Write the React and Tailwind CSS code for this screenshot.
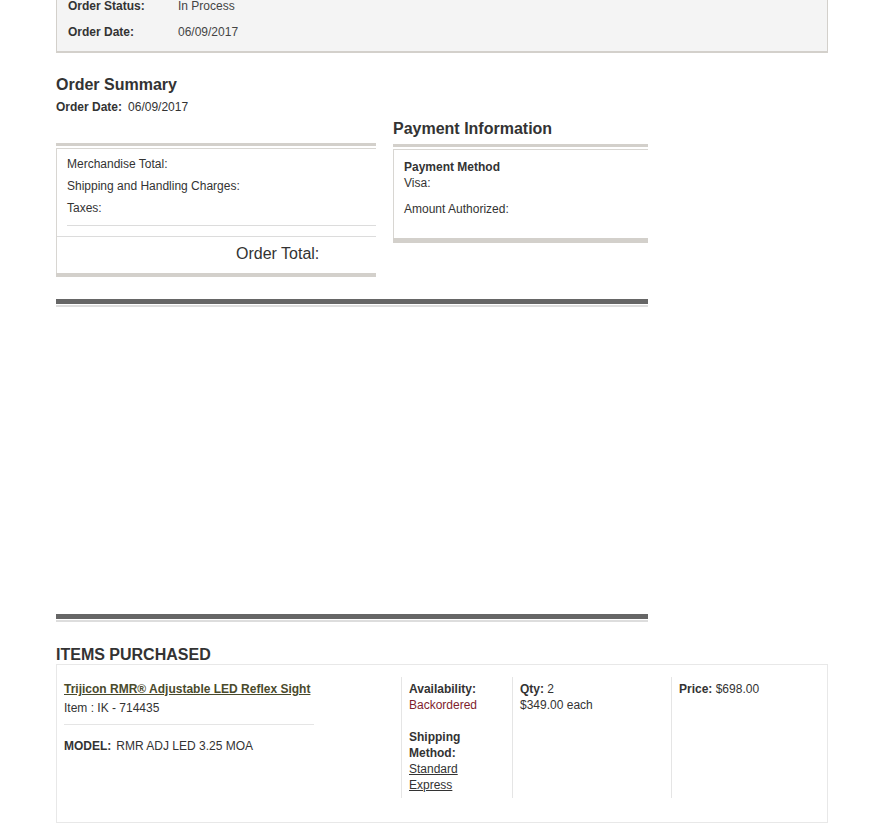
import React from "react";

export default function App() {
  return (
    <div className="min-h-[823px] bg-white text-[12px] text-[#333] overflow-hidden" style={{ fontFamily: '"Liberation Sans", Arial, sans-serif' }}>
      <div className="ml-[56px] w-[772px]">
        {/* top status box */}
        <div className="-mt-[8px] bg-[#f4f4f4] border border-[#d3d0cb] border-b-2 pl-[11px] pb-[6px]">
          <div className="flex items-center h-[26px]">
            <span className="w-[110px] font-bold">Order Status:</span>
            <span className="text-[#444]">In Process</span>
          </div>
          <div className="flex items-center h-[26px]">
            <span className="w-[110px] font-bold">Order Date:</span>
            <span className="text-[#444]">06/09/2017</span>
          </div>
        </div>

        {/* order summary heading */}
        <h2 className="mt-[22px] text-[16px] leading-[20px] font-bold text-[#333]">Order Summary</h2>
        <div className="mt-[4px] leading-[16px]">
          <span className="font-bold">Order Date:</span>
          <span className="ml-[6px]">06/09/2017</span>
        </div>

        {/* two columns */}
        <div className="mt-[4px] flex items-start gap-[17px]">
          <div className="w-[320px] mt-[24px]">
            <div className="h-[3px] bg-[#d3d0cb]"></div>
            <div className="mt-[2px] border-t border-l border-[#d8d6d2] overflow-hidden">
              <div className="pt-[4px] pl-[10px]">
                <div className="leading-[22px]">Merchandise Total:</div>
                <div className="leading-[22px]">Shipping and Handling Charges:</div>
                <div className="leading-[22px]">Taxes:</div>
                <div className="mt-[6px] h-px bg-[#dcdcdc]"></div>
              </div>
              <div className="mt-[10px] border-t border-[#dcdcdc] pt-[7px] pb-[9px] pl-[179px]">
                <span className="text-[16px] leading-[20px] block">Order Total:</span>
              </div>
            </div>
            <div className="h-[4px] bg-[#d3d0cb]"></div>
          </div>

          <div className="w-[255px]">
            <h2 className="text-[16px] leading-[20px] font-bold text-[#333]">Payment Information</h2>
            <div className="mt-[5px] h-[3px] bg-[#d3d0cb]"></div>
            <div className="mt-[2px] border-t border-l border-[#d8d6d2] pl-[10px] pt-[9px] pb-[21px]">
              <div className="font-bold leading-[16px]">Payment Method</div>
              <div className="leading-[16px]">Visa:</div>
              <div className="mt-[10px] leading-[16px]">Amount Authorized:</div>
            </div>
            <div className="h-[5px] bg-[#d3d0cb]"></div>
          </div>
        </div>

        {/* dark bars */}
        <div className="w-[592px] mt-[22px]">
          <div className="h-[5px] bg-[#666]"></div>
          <div className="mt-px h-[2px] bg-[#ddd]"></div>
        </div>
        <div className="h-[307px]"></div>
        <div className="w-[592px]">
          <div className="h-[5px] bg-[#666]"></div>
          <div className="mt-px h-[2px] bg-[#ddd]"></div>
        </div>

        {/* items purchased */}
        <h2 className="mt-[23px] text-[16px] leading-[19px] font-bold text-[#333] uppercase">Items Purchased</h2>
        <div className="border border-[#e8e8e8] pt-[12px] pb-[24px] flex">
          <div className="w-[344px] pl-[7px] pt-[4px] h-[121px]">
            <a href="#" className="font-bold underline text-[#4a4a2c] leading-[16px] block">Trijicon RMR® Adjustable LED Reflex Sight</a>
            <div className="mt-[3px] leading-[16px]">Item : IK - 714435</div>
            <div className="mt-[8px] h-px w-[250px] bg-[#e5e5e5]"></div>
            <div className="mt-[13px] leading-[16px]">
              <span className="font-bold">MODEL:</span>
              <span className="ml-[5px]">RMR ADJ LED 3.25 MOA</span>
            </div>
          </div>
          <div className="w-[111px] h-[121px] border-l border-[#e5e5e5] pl-[7px] pt-[4px] leading-[16px]">
            <div className="font-bold">Availability:</div>
            <div className="text-[#7f1d2d]">Backordered</div>
            <div className="mt-[16px] font-bold w-[60px]">Shipping Method:</div>
            <div><a href="#" className="underline text-[#333]">Standard</a></div>
            <div><a href="#" className="underline text-[#333]">Express</a></div>
          </div>
          <div className="w-[159px] h-[121px] border-l border-[#e5e5e5] pl-[7px] pt-[4px] leading-[16px]">
            <div><span className="font-bold">Qty:</span> 2</div>
            <div>$349.00 each</div>
          </div>
          <div className="flex-1 h-[121px] border-l border-[#e5e5e5] pl-[7px] pt-[4px] leading-[16px]">
            <div><span className="font-bold">Price:</span> $698.00</div>
          </div>
        </div>
      </div>
    </div>
  );
}
